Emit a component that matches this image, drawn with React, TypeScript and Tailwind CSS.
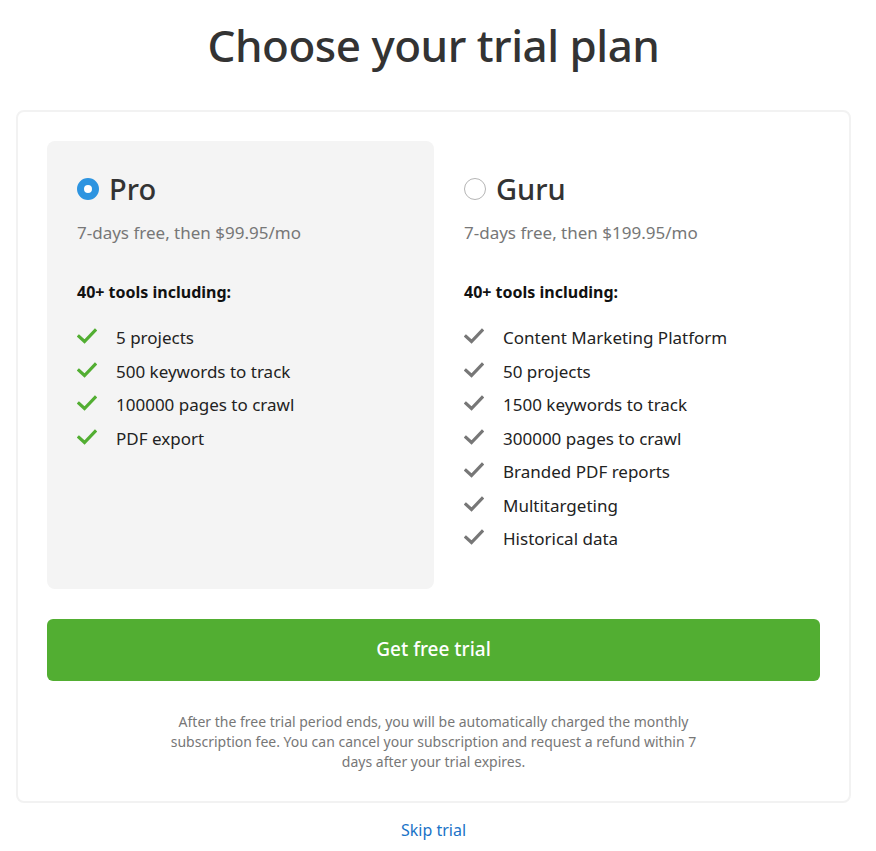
import React from "react";

const Check = ({ color }: { color: string }) => (
  <svg width="20" height="16" viewBox="0 0 20 16" className="shrink-0">
    <path d="M2 8.5 L7.5 13.5 L18 2.5" fill="none" stroke={color} strokeWidth="3.2" strokeLinecap="square" />
  </svg>
);

const proItems = ["5 projects", "500 keywords to track", "100000 pages to crawl", "PDF export"];
const guruItems = [
  "Content Marketing Platform",
  "50 projects",
  "1500 keywords to track",
  "300000 pages to crawl",
  "Branded PDF reports",
  "Multitargeting",
  "Historical data",
];

function Plan({ name, price, items, selected }: { name: string; price: string; items: string[]; selected: boolean }) {
  return (
    <div className={`flex-1 rounded-lg px-[30px] pt-[30px] pb-[28px] ${selected ? "bg-[#f4f4f4]" : ""}`}>
      <div className="flex items-center gap-[10px]">
        {selected ? (
          <span className="w-[22px] h-[22px] rounded-full border-[7px] border-[#2d94e0] bg-white" />
        ) : (
          <span className="w-[22px] h-[22px] rounded-full border border-[#b5b5b5] bg-white" />
        )}
        <span className="text-[29px] font-medium text-[#333] leading-[36px]">{name}</span>
      </div>
      <div className="mt-[14px] text-[17px] text-[#777] leading-6">{price}</div>
      <div className="mt-[35px] text-[16px] font-bold text-[#111] leading-6">40+ tools including:</div>
      <ul className="mt-[22px] flex flex-col">
        {items.map((it) => (
          <li key={it} className="flex items-start h-[33.5px]">
            <span className="pt-[2px] w-[39px]">
              <Check color={selected ? "#52ae32" : "#777777"} />
            </span>
            <span className="text-[17px] text-[#222] leading-6">{it}</span>
          </li>
        ))}
      </ul>
    </div>
  );
}

export default function App() {
  return (
    <div className="w-[867px] min-h-[851px] bg-white" style={{ fontFamily: "'Noto Sans', 'Open Sans', sans-serif" }}>
      <h1 className="text-center text-[44px] font-medium text-[#333] leading-none pt-[23px] tracking-[-0.5px]">
        Choose your trial plan
      </h1>
      <div className="mx-[16px] mt-[43px] w-[835px] border-2 border-[#f2f2f2] rounded-lg px-[29px] pt-[29px] pb-[29px]">
        <div className="flex gap-0">
          <div className="w-[387px] flex">
            <Plan name="Pro" price="7-days free, then $99.95/mo" items={proItems} selected />
          </div>
          <div className="flex-1 flex">
            <Plan name="Guru" price="7-days free, then $199.95/mo" items={guruItems} selected={false} />
          </div>
        </div>
        <button className="mt-[30px] w-full h-[62px] rounded-md bg-[#52ae32] text-white text-[19px] font-medium">
          Get free trial
        </button>
        <p className="mt-[31px] mx-auto max-w-[548px] text-center text-[14px] leading-5 text-[#777]">
          After the free trial period ends, you will be automatically charged the monthly subscription fee. You can
          cancel your subscription and request a refund within 7 days after your trial expires.
        </p>
      </div>
      <div className="text-center mt-[15px] text-[16px] text-[#1a73c7]">Skip trial</div>
    </div>
  );
}
